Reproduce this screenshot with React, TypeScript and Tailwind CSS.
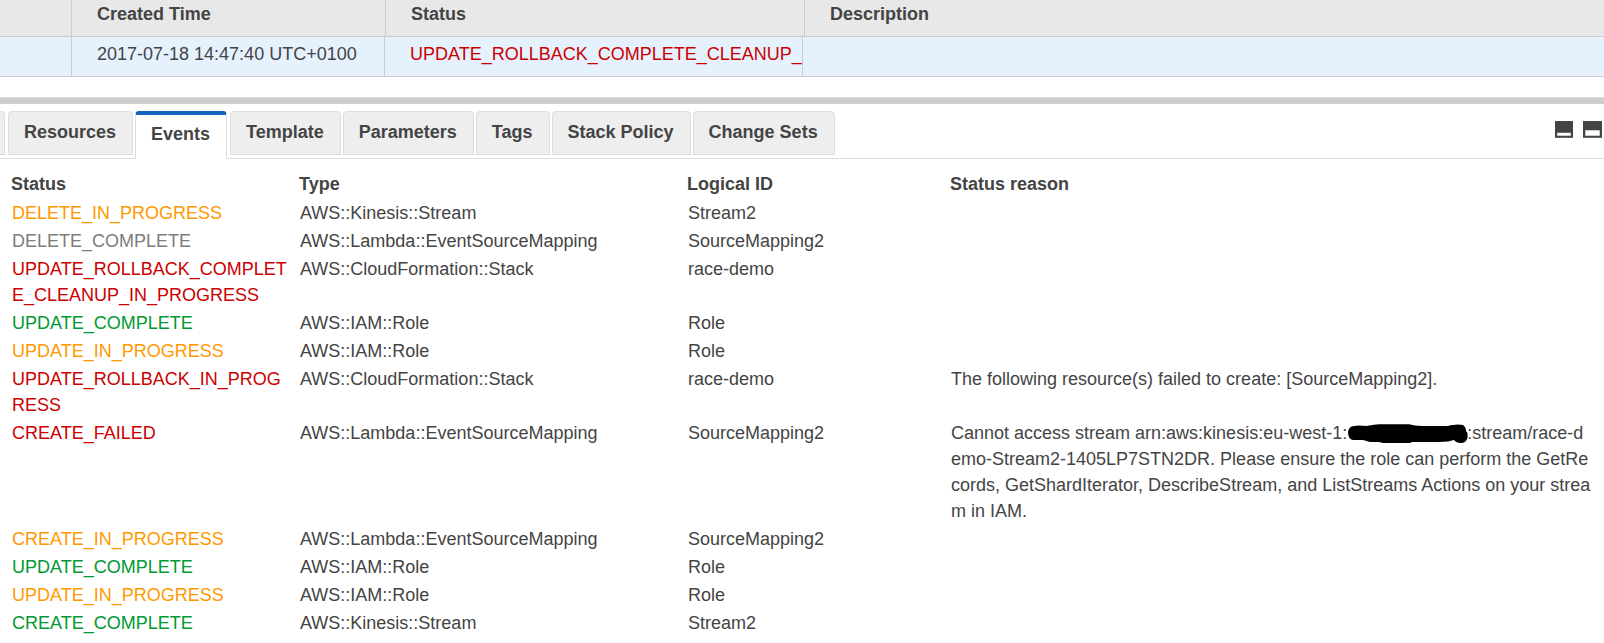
import React from "react";

const RED = "text-[#cc0000]";
const GREEN = "text-[#009933]";
const ORANGE = "text-[#ff9900]";
const GRAY = "text-[#7d7d7d]";

function Redacted() {
  return (
    <svg
      role="img"
      aria-label="redacted"
      viewBox="0 0 120 20"
      className="inline-block h-[20px] w-[120px] overflow-visible align-[-5px]"
    >
      <path
        d="M1 8 Q2 2 7 2 L12 1.500 L19 2 L27 .8 L32 0.300 L62 0.300 L68 1.500 L75 2 L101 2 Q103 1 106 1 Q111 -.2 116 1 Q119 3 119 7 L120.500 9 L120.500 14 Q119 19 114 19 Q109 19 107 16 L101 17.500 L92 18 L65 18 L63 19 L36 19 L32 18 L23 18 L16 16 L6 16 Q1 15 1 8Z"
        fill="#000"
      />
    </svg>
  );
}

interface StackEvent {
  status: string;
  color: string;
  type: string;
  id: string;
  reason?: React.ReactNode;
}

const events: StackEvent[] = [
  { status: "DELETE_IN_PROGRESS", color: ORANGE, type: "AWS::Kinesis::Stream", id: "Stream2" },
  { status: "DELETE_COMPLETE", color: GRAY, type: "AWS::Lambda::EventSourceMapping", id: "SourceMapping2" },
  { status: "UPDATE_ROLLBACK_COMPLETE_CLEANUP_IN_PROGRESS", color: RED, type: "AWS::CloudFormation::Stack", id: "race-demo" },
  { status: "UPDATE_COMPLETE", color: GREEN, type: "AWS::IAM::Role", id: "Role" },
  { status: "UPDATE_IN_PROGRESS", color: ORANGE, type: "AWS::IAM::Role", id: "Role" },
  {
    status: "UPDATE_ROLLBACK_IN_PROGRESS",
    color: RED,
    type: "AWS::CloudFormation::Stack",
    id: "race-demo",
    reason: "The following resource(s) failed to create: [SourceMapping2].",
  },
  {
    status: "CREATE_FAILED",
    color: RED,
    type: "AWS::Lambda::EventSourceMapping",
    id: "SourceMapping2",
    reason: (
      <>
        Cannot access stream arn:aws:kinesis:eu-west-1:
        <Redacted />
        :stream/race-demo-Stream2-1405LP7STN2DR. Please ensure the role can perform the GetRecords,
        GetShardIterator, DescribeStream, and ListStreams Actions on your stream in IAM.
      </>
    ),
  },
  { status: "CREATE_IN_PROGRESS", color: ORANGE, type: "AWS::Lambda::EventSourceMapping", id: "SourceMapping2" },
  { status: "UPDATE_COMPLETE", color: GREEN, type: "AWS::IAM::Role", id: "Role" },
  { status: "UPDATE_IN_PROGRESS", color: ORANGE, type: "AWS::IAM::Role", id: "Role" },
  { status: "CREATE_COMPLETE", color: GREEN, type: "AWS::Kinesis::Stream", id: "Stream2" },
];

const tabs = ["Resources", "Events", "Template", "Parameters", "Tags", "Stack Policy", "Change Sets"];

function StackTable() {
  return (
    <table className="block w-full text-left">
      <thead className="block border-b border-[#cccccc] bg-[#e8e8e8]">
        <tr className="grid h-9 grid-cols-[72px_314px_419px_1fr]">
          <td className="border-r border-[#cccccc]" />
          <th className="border-r border-[#cccccc] px-[25px] pt-px font-bold">Created Time</th>
          <th className="border-r border-[#cccccc] px-[25px] pt-px font-bold">Status</th>
          <th className="px-[25px] pt-px font-bold">Description</th>
        </tr>
      </thead>
      <tbody className="block border-b border-[#cccccc] bg-[#e5f2fe]">
        <tr className="grid h-[39px] grid-cols-[72px_313px_418px_1fr]">
          <td className="border-r border-[#cccccc]" />
          <td className="border-r border-[#cccccc] pt-1 pl-[25px] whitespace-nowrap">2017-07-18 14:47:40 UTC+0100</td>
          <td className="overflow-hidden border-r border-[#cccccc] pt-1 pl-[25px] whitespace-nowrap text-[#cc0000]">
            UPDATE_ROLLBACK_COMPLETE_CLEANUP_IN_PROGRESS
          </td>
          <td />
        </tr>
      </tbody>
    </table>
  );
}

function TabBar() {
  return (
    <div className="flex h-[55px] justify-between border-b border-[#dddddd] pt-[7px]">
      <div role="tablist" className="flex items-start gap-0.5">
        <span className="mr-px h-11 w-[5px] rounded-tr border border-l-0 border-[#dddddd] bg-[#eeeeee]" />
        {tabs.map((tab) =>
          tab === "Events" ? (
            <button
              key={tab}
              role="tab"
              aria-selected="true"
              className="mr-px h-12 rounded-t-sm border-x border-t-4 border-x-[#dddddd] border-t-[#1166bb] bg-white pr-4 pb-1.5 pl-[15px] font-bold"
            >
              {tab}
            </button>
          ) : (
            <button
              key={tab}
              role="tab"
              aria-selected="false"
              className="h-11 rounded-t border border-[#dddddd] bg-[#eeeeee] pr-4 pb-0.5 pl-[15px] font-bold"
            >
              {tab}
            </button>
          ),
        )}
      </div>
      <div className="flex items-start gap-2.5 pt-2.5 pr-0.5">
        <button aria-label="Minimize panel">
          <svg width="18" height="17" viewBox="0 0 18 17" className="block">
            <rect width="18" height="17" fill="#444" />
            <rect y="16" width="18" height="1" fill="#666" />
            <rect x="2" y="11.500" width="14" height="3.500" fill="#999" />
            <rect x="2.500" y="12" width="13" height="2.500" fill="#fff" />
          </svg>
        </button>
        <button aria-label="Split panel">
          <svg width="19" height="17" viewBox="0 0 19 17" className="block">
            <rect width="19" height="17" fill="#444" />
            <rect y="16" width="19" height="1" fill="#666" />
            <rect x="2" y="9" width="15" height="6" fill="#999" />
            <rect x="2.500" y="9.500" width="14" height="5" fill="#fff" />
          </svg>
        </button>
      </div>
    </div>
  );
}

export default function App() {
  return (
    <main className="overflow-hidden bg-white font-['Liberation_Sans',Arial,sans-serif] text-[18px] leading-[26px] text-[#444444]">
      <StackTable />
      <div className="mt-5 h-[7px] border-t border-[#dddddd] bg-[#cccccc]" />
      <TabBar />
      <table className="mt-[11px] w-full table-fixed text-left">
        <colgroup>
          <col className="w-[290px]" />
          <col className="w-[388px]" />
          <col className="w-[263px]" />
          <col />
        </colgroup>
        <thead>
          <tr className="h-[29px] align-top">
            <th className="pt-px pl-[11px] font-bold">Status</th>
            <th className="pt-px pl-[9px] font-bold">Type</th>
            <th className="pt-px pl-[9px] font-bold">Logical ID</th>
            <th className="pt-px pl-[9px] font-bold">Status reason</th>
          </tr>
        </thead>
        <tbody>
          {events.map((event, i) => (
            <tr key={i} className="align-top break-all">
              <td className={`py-px pl-3 ${event.color}`}>{event.status}</td>
              <td className="py-px pl-2.5">{event.type}</td>
              <td className="py-px pl-2.5">{event.id}</td>
              <td className="py-px pr-3 pl-2.5">{event.reason}</td>
            </tr>
          ))}
        </tbody>
      </table>
    </main>
  );
}
